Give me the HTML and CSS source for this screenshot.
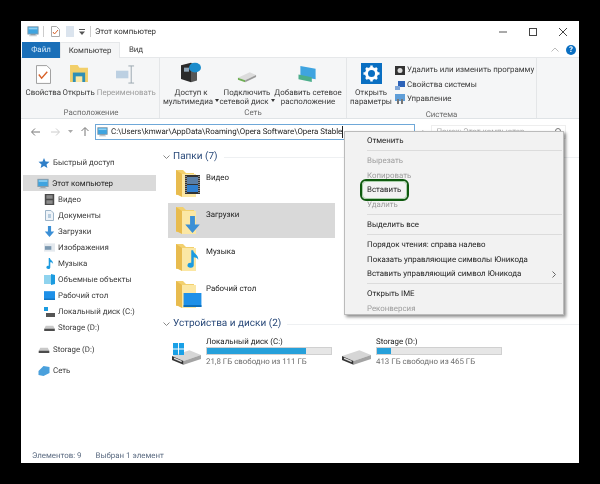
FILE: index.html
```html
<!DOCTYPE html>
<html lang="ru">
<head>
<meta charset="utf-8">
<title>Этот компьютер</title>
<link rel="stylesheet" href="styles.css">
</head>
<body>
<svg class="defs" width="0" height="0" aria-hidden="true">
  <defs>
    <symbol id="pc" viewBox="0 0 14 12"><rect x="1" y="0.5" width="12" height="8.5" fill="#3fa4e0" stroke="#8a9aa6"/><rect x="2" y="1.5" width="10" height="2" fill="#8fd0f2"/><rect x="4" y="9" width="6" height="1.5" fill="#8a9aa6"/><rect x="2.5" y="10.5" width="9" height="1" fill="#b6c0c8"/></symbol>
    <symbol id="drive" viewBox="0 0 14 8"><path d="M2 1h10l2 4v3H0V5z" fill="#c9c9c9"/><rect y="5" width="14" height="3" fill="#4c4c4c"/></symbol>
    <symbol id="bigdrive" viewBox="0 0 30 15"><path d="M0 6 18 0l12 5-18 6z" fill="#d6d6d6"/><path d="M0 6l12 5v4L0 10z" fill="#333"/><path d="M2 7.500l8 3.300v1.500L2 9z" fill="#ddd"/><path d="M12 11l18-6v4l-18 6z" fill="#a4a4a4"/></symbol>
    <symbol id="folder" viewBox="0 0 25 27"><path d="M0 0h7l3 3h8v22H0z" fill="#f2d06e"/><path d="M6 4h14v23H6z" fill="#fbe7a4"/><path d="M0 0l6 4v23l-6-3z" fill="#e8bb4e"/></symbol>
    <symbol id="ico-down" viewBox="0 0 12 14"><path d="M4 0h4v7h4l-6 7-6-7h4z" fill="#3b8fd6"/></symbol>
    <symbol id="ico-note" viewBox="0 0 12 14"><path d="M5 0h1.500c.5 3 4.500 3.500 4 7.500C10 6 8 5.500 7 5.500V12a2.500 2 0 1 1-2-2z" fill="#1b9be0"/></symbol>
    <symbol id="ico-desk" viewBox="0 0 14 11"><rect width="14" height="11" fill="#1e90e8"/><rect y="9.500" width="14" height="1.500" fill="#0d6db8"/></symbol>
    <symbol id="ico-film" viewBox="0 0 12 14"><rect width="12" height="14" fill="#4a4a4a"/><rect x="2" y="1.500" width="8" height="4.500" fill="#8b8b8b"/><rect x="2" y="8" width="8" height="4.500" fill="#8b8b8b"/></symbol>
  </defs>
</svg>
<div class="window">
  <header class="titlebar">
    <svg class="qa-pc" width="12" height="11"><use href="#pc"/></svg>
    <span class="qa-sep"></span>
    <svg class="qa-doc" width="9" height="11" viewBox="0 0 9 11"><path d="M.5.500h5l3 3v7H.5z" fill="#fff" stroke="#aaa"/><path d="M2 6l1.500 2L7 4" fill="none" stroke="#d8622a"/></svg>
    <svg class="qa-doc2" width="8" height="11" viewBox="0 0 8 11"><rect width="8" height="11" fill="#dbe4ee"/></svg>
    <svg class="qa-arrow" width="6" height="6" viewBox="0 0 6 6"><path d="M0 0h6v1H0zM0 2.500h6L3 6z" fill="#555"/></svg>
    <span class="qa-sep qa-sep2"></span>
    <span class="title">Этот компьютер</span>
    <div class="winbtns">
      <svg width="10" height="10" viewBox="0 0 10 10"><path d="M1 5h8" stroke="#555"/></svg>
      <svg width="10" height="10" viewBox="0 0 10 10"><rect x="1.500" y="1.500" width="7" height="7" fill="none" stroke="#444"/></svg>
      <svg width="10" height="10" viewBox="0 0 10 10"><path d="M1 1l8 8M9 1l-8 8" stroke="#444"/></svg>
    </div>
  </header>
  <nav class="tabs">
    <span class="tab tab-file">Файл</span>
    <span class="tab tab-active">Компьютер</span>
    <span class="tab tab-view">Вид</span>
    <svg class="tab-chev" width="8" height="5" viewBox="0 0 8 5"><path d="M.5 4.500 4 1l3.500 3.500" fill="none" stroke="#bbb"/></svg>
    <span class="help">?</span>
  </nav>
  <section class="ribbon">
    <div class="group g1">
      <div class="items">
        <div class="rib rib-a">
          <svg width="15" height="19" viewBox="0 0 16 20"><path d="M.5.500h11l4 4v15H.5z" fill="#fff" stroke="#999"/><path d="M3 10l3 4 6-7" fill="none" stroke="#d8622a" stroke-width="1.500"/></svg>
          <span>Свойства</span>
        </div>
        <div class="rib rib-b">
          <svg width="18" height="17" viewBox="0 0 19 18"><path d="M0 0h8l2 3h9v15H0z" fill="#f2cf6a"/><path d="M3 8h13v10H3z" fill="#2f8fb5"/><path d="M6 12h7v6H6z" fill="#fbe7a4"/></svg>
          <span>Открыть</span>
        </div>
        <div class="rib rib-c">
          <svg width="20" height="19" viewBox="0 0 21 20"><rect y="6" width="13" height="8" fill="#bcd0e2"/><path d="M13 1h6M16 1v18M13 19h6" stroke="#9aa6b0" fill="none"/></svg>
          <span class="muted">Переименовать</span>
        </div>
      </div>
      <div class="group-label">Расположение</div>
    </div>
    <div class="group g2">
      <div class="items">
        <div class="rib rib-d">
          <svg width="22" height="21" viewBox="0 0 22 26" preserveAspectRatio="none"><path d="M1 4 11 1v24L1 21z" fill="#2a2a2a"/><path d="M11 1l6 3v19l-6 2z" fill="#555"/><circle cx="15" cy="7" r="6" fill="#1b8ccc"/><rect x="4" y="7" width="5" height="5" fill="#8ea3b5"/></svg>
          <span>Доступ к<br>мультимедиа <i class="caret"></i></span>
        </div>
        <div class="rib rib-e">
          <svg width="20" height="12" viewBox="0 0 22 18" preserveAspectRatio="none"><path d="M1 10 14 2l7 4-12 8z" fill="#dcdcdc"/><path d="M1 10l8 4v3l-8-4z" fill="#6fae54"/><path d="M9 14l12-8v3L9 17z" fill="#9a9a9a"/></svg>
          <span>Подключить<br>сетевой диск <i class="caret"></i></span>
        </div>
        <div class="rib rib-f">
          <svg width="22" height="19" viewBox="0 0 22 20"><path d="M3 1l16 3v11L3 12z" fill="#3fa4e0"/><path d="M1 10l14 3v5L1 15z" fill="#4cae8c"/></svg>
          <span>Добавить сетевое<br>расположение</span>
        </div>
      </div>
      <div class="group-label">Сеть</div>
    </div>
    <div class="group g3">
      <div class="items">
        <div class="rib rib-g">
          <svg width="21" height="21" viewBox="0 0 21 21"><rect width="21" height="21" fill="#0a6fc2"/><circle cx="10.500" cy="10.500" r="5" fill="none" stroke="#fff" stroke-width="3"/><path d="M10.500 2.500v3M10.500 15.500v3M2.500 10.500h3M15.500 10.500h3M5 5l2 2M14 14l2 2M16 5l-2 2M7 14l-2 2" stroke="#fff" stroke-width="2.500"/></svg>
          <span>Открыть<br>параметры</span>
        </div>
        <ul class="sys">
          <li><svg width="10" height="10" viewBox="0 0 10 10"><rect y="1" width="10" height="9" fill="#333"/><circle cx="5" cy="5.500" r="2.500" fill="#ddd"/></svg>Удалить или изменить программу</li>
          <li><svg width="10" height="10" viewBox="0 0 10 10"><rect x="3" y="1" width="7" height="6" fill="#2c62b8"/><rect y="6" width="5" height="4" fill="#7fa6d8"/></svg>Свойства системы</li>
          <li><svg width="10" height="10" viewBox="0 0 10 10"><rect width="10" height="7" fill="#5f9ed8"/><rect x="2" y="5" width="2" height="5" fill="#777"/><rect x="6" y="5" width="2" height="5" fill="#777"/></svg>Управление</li>
        </ul>
      </div>
      <div class="group-label">Система</div>
    </div>
  </section>
  <div class="addrrow">
    <svg class="nav nav-back" width="9" height="8" viewBox="0 0 9 8"><path d="M4 .5.500 4 4 7.500M1 4h8" fill="none" stroke="#777"/></svg>
    <svg class="nav nav-fwd" width="9" height="8" viewBox="0 0 9 8"><path d="M5 .5 8.500 4 5 7.500M0 4h8" fill="none" stroke="#ccc"/></svg>
    <svg class="nav nav-dn" width="5" height="3" viewBox="0 0 5 3"><path d="M0 0h5L2.500 3z" fill="#aaa"/></svg>
    <svg class="nav nav-up" width="8" height="9" viewBox="0 0 8 9"><path d="M.5 4 4 .5 7.500 4M4 1v8" fill="none" stroke="#777"/></svg>
    <div class="addr">
      <svg width="11" height="10"><use href="#pc"/></svg>
      <span class="path">C:\Users\kmwar\AppData\Roaming\Opera Software\Opera Stable</span><span class="caretbar"></span>
    </div>
    <span class="hist">›</span>
    <div class="search"><span>Поиск: Этот компьютер</span><svg width="7" height="7" viewBox="0 0 7 7"><circle cx="4" cy="3" r="2.500" fill="none" stroke="#777"/><path d="M2 5 .5 6.500" stroke="#777"/></svg></div>
  </div>
  <main class="body">
    <aside class="side">
      <div class="row row-top"><svg width="11" height="10" viewBox="0 0 11 10"><path d="M5.500 0 7 3.500l4 .3-3 2.600.9 3.600-3.400-2-3.400 2L3 6.400 0 3.800l4-.3z" fill="#2f7fc8"/></svg>Быстрый доступ</div>
      <div class="row row-top row-sel"><svg width="14" height="12"><use href="#pc"/></svg>Этот компьютер</div>
      <div class="row sub"><svg width="10" height="11"><use href="#ico-film"/></svg>Видео</div>
      <div class="row sub"><svg width="9" height="11" viewBox="0 0 9 11"><path d="M.5.500h5.500l2.500 2.500v7.500H.5z" fill="#eef3f8" stroke="#9db4c8"/><path d="M3 5h3M3 7h3" stroke="#7ea4c4"/></svg>Документы</div>
      <div class="row sub"><svg width="10" height="11"><use href="#ico-down"/></svg>Загрузки</div>
      <div class="row sub"><svg width="12" height="9" viewBox="0 0 12 9"><rect width="12" height="9" fill="#e4e9ee"/><rect x="1" y="3" width="7" height="4" fill="#7b98b0"/></svg>Изображения</div>
      <div class="row sub"><svg width="9" height="11"><use href="#ico-note"/></svg>Музыка</div>
      <div class="row sub"><svg width="11" height="11" viewBox="0 0 11 11"><path d="M0 1h7v9H0z" fill="#8fd3ee"/><path d="M7 0l4 1v9l-4 1z" fill="#1b9be0"/></svg>Объемные объекты</div>
      <div class="row sub"><svg width="11" height="9"><use href="#ico-desk"/></svg>Рабочий стол</div>
      <div class="row sub"><svg width="11" height="10" viewBox="0 0 11 10"><rect width="4" height="4" fill="#1b9be0"/><rect x="2" y="6" width="9" height="4" fill="#555"/></svg>Локальный диск (C:)</div>
      <div class="row sub"><svg width="10" height="6"><use href="#drive"/></svg>Storage (D:)</div>
      <div class="row row-top row-gap"><svg width="10" height="6"><use href="#drive"/></svg>Storage (D:)</div>
      <div class="row row-top row-gap2"><svg width="11" height="10" viewBox="0 0 11 10"><path d="M0 5l5-5 6 1v6l-6 3-5-1z" fill="#4aa0dc"/></svg>Сеть</div>
      <footer class="status"><span>Элементов: 9</span><span>Выбран 1 элемент</span></footer>
    </aside>
    <div class="content">
      <h2 class="sect"><svg width="7" height="4" viewBox="0 0 7 4"><path d="M.5.500 3.500 3.500 6.500.500" fill="none" stroke="#888"/></svg><span>Папки (7)</span><i></i></h2>
      <div class="folder">
        <span class="ficon"><svg width="25" height="27"><use href="#folder"/></svg><svg class="fbadge fb-film" width="15" height="19" viewBox="0 0 15 19"><rect width="15" height="19" fill="#333"/><rect x="2" y="2" width="11" height="7" fill="#5a7fa8"/><rect x="2" y="10" width="11" height="7" fill="#2f7fd0"/><path d="M1 1v17M14 1v17" stroke="#ddd" stroke-dasharray="1 1"/></svg></span>
        <span class="fname">Видео</span>
      </div>
      <div class="folder folder-sel">
        <span class="ficon"><svg width="25" height="27"><use href="#folder"/></svg><svg class="fbadge fb-down" width="15" height="17"><use href="#ico-down"/></svg></span>
        <span class="fname">Загрузки</span>
      </div>
      <div class="folder">
        <span class="ficon"><svg width="25" height="27"><use href="#folder"/></svg><svg class="fbadge fb-note" width="15" height="20"><use href="#ico-note"/></svg></span>
        <span class="fname">Музыка</span>
      </div>
      <div class="folder">
        <span class="ficon"><svg width="25" height="27"><use href="#folder"/></svg><svg class="fbadge fb-desk" width="19" height="14"><use href="#ico-desk"/></svg></span>
        <span class="fname">Рабочий стол</span>
      </div>
      <h2 class="sect sect2"><svg width="7" height="4" viewBox="0 0 7 4"><path d="M.5.500 3.500 3.500 6.500.500" fill="none" stroke="#888"/></svg><span>Устройства и диски (2)</span><i></i></h2>
      <div class="drives">
        <div class="drv">
          <span class="dicon"><svg width="29" height="15"><use href="#bigdrive"/></svg><svg class="win" width="11" height="12" viewBox="0 0 12 12" preserveAspectRatio="none"><path d="M0 0h5.500v5.500H0zM6.500 0H12v5.500H6.500zM0 6.500h5.500V12H0zM6.500 6.500H12V12H6.500z" fill="#19a0e6"/></svg></span>
          <div class="dinfo"><div class="dname">Локальный диск (C:)</div><div class="bar"><div class="fill fill-c"></div></div><div class="dfree">21,8 ГБ свободно из 111 ГБ</div></div>
        </div>
        <div class="drv">
          <span class="dicon"><svg width="29" height="15"><use href="#bigdrive"/></svg></span>
          <div class="dinfo"><div class="dname">Storage (D:)</div><div class="bar"><div class="fill fill-d"></div></div><div class="dfree">413 ГБ свободно из 465 ГБ</div></div>
        </div>
      </div>
    </div>
  </main>
  <div class="menu">
    <div class="mi">Отменить</div>
    <hr>
    <div class="mi dis">Вырезать</div>
    <div class="mi dis">Копировать</div>
    <div class="mi"><span class="ring">Вставить</span></div>
    <div class="mi dis">Удалить</div>
    <hr>
    <div class="mi">Выделить все</div>
    <hr>
    <div class="mi">Порядок чтения: справа налево</div>
    <div class="mi">Показать управляющие символы Юникода</div>
    <div class="mi mi-sub">Вставить управляющий символ Юникода<svg width="4" height="7" viewBox="0 0 4 7"><path d="M.5.500l3 3-3 3" fill="none" stroke="#666"/></svg></div>
    <hr>
    <div class="mi">Открыть IME</div>
    <div class="mi dis">Реконверсия</div>
  </div>
</div>
</body>
</html>
```
FILE: styles.css
```css
* { box-sizing: border-box; }
html, body { margin: 0; height: 100%; }
body { background: #000; padding: 21px; font: 7.900px/12px Roboto, "Open Sans", sans-serif; text-rendering: geometricPrecision; color: #3a3a3a; overflow: hidden; }
.defs { position: absolute; }
.window { position: relative; width: 558px; height: 442px; background: #fff; display: flex; flex-direction: column; filter: blur(.3px); }

.titlebar { height: 21px; display: flex; align-items: center; padding-left: 6px; flex: none; }
.qa-sep { width: 1px; height: 11px; background: #ccc; margin: 0 7px 0 4px; }
.qa-sep2 { margin: 0 4px 0 5px; }
.qa-doc { margin-right: 6px; }
.qa-doc2 { margin-right: 5px; }
.title { color: #333; padding-top: 1px; }
.winbtns { margin-left: auto; display: flex; gap: 20px; padding-right: 11px; }

.tabs { height: 16px; display: flex; align-items: stretch; flex: none; background: linear-gradient(#fff 15px, #e6e8ea 15px); position: relative; }
.tab { display: flex; align-items: center; justify-content: center; }
.tab-file { width: 38px; margin-left: 1px; background: #1a6fb8; color: #d8ebfa; }
.tab-active { width: 60px; background: #f5f6f7; border: 1px solid #e6e8ea; border-bottom: 0; }
.tab-view { width: 30px; margin-left: 1px; }
.tab-chev { margin: 5px 7px 0 auto; }
.help { width: 10px; height: 10px; border-radius: 50%; background: #0a6fc2; color: #fff; font-size: 8px; font-weight: 700; line-height: 10px; text-align: center; margin: 3px 3px 0 0; }

.ribbon { height: 61px; background: #f5f6f7; display: flex; flex: none; border-bottom: 1px solid #dfe3e6; }
.group { display: flex; flex-direction: column; border-right: 1px solid #e4e6e8; }
.g1 { width: 139px; padding-left: 2px; }
.g2 { width: 187px; }
.g3 { width: 190px; }
.items { flex: 1; display: flex; }
.group-label { height: 14px; padding-top: 2px; line-height: 12px; text-align: center; color: #6a6a6a; }
.rib { display: flex; flex-direction: column; align-items: center; text-align: center; line-height: 9px; height: 47px; white-space: nowrap; }
.rib svg { flex: none; }
.rib span { display: block; height: 17px; margin-top: auto; }
.rib-a { width: 41px; padding-top: 7px; }
.rib-b { width: 30px; padding-top: 7px; }
.rib-c { width: 66px; padding-top: 7px; }
.rib-d { width: 62px; padding-top: 4px; }
.rib-e { width: 50px; padding-top: 13px; }
.rib-f { width: 72px; padding-top: 7px; }
.rib-g { width: 48px; padding-top: 5px; }
.muted { color: #9c9c9c; }
.caret { display: inline-block; border: 2px solid transparent; border-top: 3px solid #333; border-bottom: 0; vertical-align: 2px; }
.sys { list-style: none; margin: 5px 0 0; padding: 0; }
.sys li { display: flex; align-items: center; gap: 2px; height: 14.500px; white-space: nowrap; }

.addrrow { height: 25px; display: flex; align-items: center; flex: none; position: relative; }
.nav-back { margin-left: 10px; }
.nav-fwd { margin-left: 11px; }
.nav-dn { margin-left: 8px; }
.nav-up { margin-left: 8px; }
.addr { width: 320px; height: 16px; margin-left: 6px; border: 1px solid #6fa8d8; display: flex; align-items: center; padding-left: 1px; white-space: nowrap; color: #222; }
.addr svg { margin-right: 3px; }
.caretbar { width: 1px; height: 12px; background: #222; }
.hist { margin-left: 7px; color: #777; }
.search { width: 135px; height: 14px; margin-left: 7px; border: 1px solid #eee; display: flex; align-items: center; justify-content: space-between; padding: 0 4px; color: #aaa; }

.body { flex: 1; display: flex; min-height: 0; }
.side { width: 142px; display: flex; flex-direction: column; padding-top: 10px; flex: none; }
.row { height: 16px; display: flex; align-items: center; white-space: nowrap; padding-top: 1px; }
.row-top { padding-left: 17px; }
.row-top svg { width: 12px; margin-right: 3px; flex: none; }
.row-sel { margin: 5px 0 0 2px; width: 133px; padding-left: 14px; background: #dadada; color: #222; }
.sub { padding-left: 23px; }
.sub svg { width: 11px; margin-right: 3px; flex: none; }
.row-gap { margin-top: 6px; }
.row-gap2 { margin-top: 5px; }
.status { margin-top: auto; height: 18px; padding: 3px 0 0 11px; display: flex; gap: 14px; align-items: center; white-space: nowrap; color: #5a6a80; }

.content { flex: 1; padding-top: 5px; min-width: 0; }
.sect { margin: 1px 0 2px; height: 14px; display: flex; align-items: center; gap: 3px; font: 400 10px/14px Roboto, sans-serif; color: #2a4a7a; white-space: nowrap; }
.sect i { flex: 1; height: 1px; background: #eef0f2; margin-left: 3px; }
.folder { width: 167px; height: 35px; display: flex; margin: 0 0 2px 5px; padding: 4px 0 0 8px; }
.folder-sel { background: #d9d9d9; }
.ficon { position: relative; width: 25px; height: 27px; margin-right: 5px; }
.fbadge { position: absolute; }
.fb-film { left: 9px; top: 5px; }
.fb-down { left: 9px; top: 9px; }
.fb-note { left: 9px; top: 5px; }
.fb-desk { left: 7px; top: 12px; }
.fname { line-height: 12px; padding-top: 2px; color: #222; }
.sect2 { margin: 5px 0 0; }
.drives { display: flex; margin-top: 4px; padding-left: 9px; }
.drv { width: 170px; display: flex; gap: 5px; }
.dicon { width: 29px; padding-top: 15px; position: relative; display: block; }
.win { position: absolute; left: 1px; top: 8px; }
.dinfo { width: 126px; }
.dname { height: 11px; line-height: 13px; color: #222; white-space: nowrap; }
.bar { height: 8px; margin-top: 1px; background: #e6e6e6; border: 1px solid #d0d0d0; }
.fill { height: 100%; background: #26a0da; }
.fill-c { width: 80%; }
.fill-d { width: 11%; }
.dfree { line-height: 11px; margin-top: 1px; color: #6d6d6d; white-space: nowrap; }

.menu { position: absolute; left: 323px; top: 110px; width: 220px; height: 184px; background: #f2f2f2; border: 1px solid #bbb; box-shadow: 2px 2px 3px rgba(0,0,0,.45); padding: 1px 0; color: #222; }
.mi { height: 14.800px; line-height: 16px; padding-left: 22px; white-space: nowrap; position: relative; }
.dis { color: #9d9d9d; }
.mi-sub svg { position: absolute; right: 7px; top: 5px; }
.menu hr { border: 0; border-top: 1px solid #dcdcdc; margin: 2px 1px 2px 22px; }
.ring { display: inline-block; position: relative; }
.ring::after { content: ""; position: absolute; left: -7px; right: -8px; top: -3px; bottom: -3px; border: 2px solid #0f5a0f; border-radius: 6px; outline: 1px solid #a9cfa9; outline-offset: -3px; }
```
